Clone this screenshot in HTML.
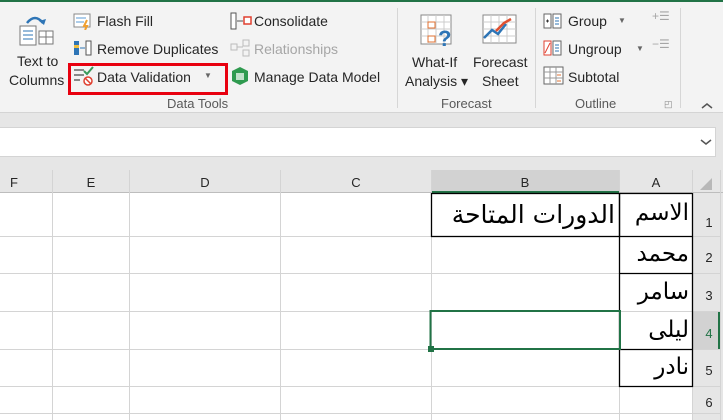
<!DOCTYPE html>
<html><head><meta charset="utf-8"><style>
*{box-sizing:border-box;margin:0;padding:0}
body{width:723px;height:420px;overflow:hidden;background:#e6e6e6;font-family:"Liberation Sans",sans-serif;position:relative;font-size:13px;color:#262626}
.abs{position:absolute}
.rib{left:0;top:0;width:723px;height:113px;background:#f3f3f3;border-top:2px solid #217346;border-bottom:1px solid #d4d4d4}
.t{position:absolute;white-space:nowrap;font-size:14px;color:#262626}
.g{color:#a6a6a6}
.sep{position:absolute;top:6px;width:1px;height:100px;background:#d6d6d6}
.lbl{position:absolute;font-size:13px;color:#595959;top:94px}
.ic{position:absolute}
.cell{position:absolute;background:#fff}
.ar{position:absolute;direction:rtl;text-align:right;font-family:"DejaVu Sans","Noto Sans CJK SC",sans-serif;font-size:23px;color:#000;white-space:nowrap;line-height:1}
</style></head><body>
<div class="abs rib">
 <svg class="ic" style="left:17px;top:9px" width="40" height="36"><path d="M10 12 Q18 2 26 12" fill="none" stroke="#2e75b6" stroke-width="2.5"/><path d="M22 10 l5 4 2-6z" fill="#2e75b6"/><rect x="3" y="15" width="16" height="19" fill="#fff" stroke="#777"/><path d="M6 20h10M6 24h10M6 28h10" stroke="#2e75b6"/><rect x="22" y="20" width="14" height="13" fill="#fff" stroke="#777"/><path d="M22 26h14M29 20v13" stroke="#777"/></svg>
 <div class="t" style="left:17px;top:51px">Text to</div>
 <div class="t" style="left:9px;top:70px">Columns</div>
 <svg class="ic" style="left:73px;top:10px" width="20" height="18"><rect x="1" y="2" width="16" height="13" fill="#fff" stroke="#888"/><path d="M3 6h10M3 10h8" stroke="#5b9bd5"/><path d="M14 8l-3 6h3l-2 4" stroke="#f0a030" stroke-width="2" fill="none"/></svg>
 <div class="t" style="left:97px;top:11px">Flash Fill</div>
 <svg class="ic" style="left:73px;top:37px" width="20" height="18"><rect x="1" y="2" width="5" height="14" fill="#2e75b6"/><rect x="13" y="2" width="5" height="14" fill="#fff" stroke="#555"/><path d="M7 9h5" stroke="#2e75b6"/><rect x="1" y="6" width="5" height="3" fill="#f0c040"/></svg>
 <div class="t" style="left:97px;top:39px">Remove Duplicates</div>
 <svg class="ic" style="left:73px;top:64px" width="22" height="20"><path d="M1 4h10M1 9h10M1 14h6" stroke="#888" stroke-width="2"/><path d="M11 5l3 3 6-7" stroke="#3a9a5a" stroke-width="2" fill="none"/><circle cx="15" cy="15" r="4" fill="#fff" stroke="#e04030" stroke-width="1.5"/><path d="M12 12l6 6" stroke="#e04030" stroke-width="1.5"/></svg>
 <div class="t" style="left:97px;top:67px">Data Validation</div>
 <div class="t" style="left:204px;top:69px;font-size:8px;color:#666">▼</div>
 <div class="abs" style="left:68px;top:61px;width:160px;height:32px;border:3px solid #e8000f"></div>
 <svg class="ic" style="left:230px;top:10px" width="22" height="18"><rect x="1" y="1" width="5" height="16" fill="#fff" stroke="#555"/><path d="M7 9h6" stroke="#555"/><rect x="14" y="5" width="7" height="7" fill="#fff" stroke="#e04030" stroke-width="1.5"/></svg>
 <div class="t" style="left:254px;top:11px">Consolidate</div>
 <svg class="ic" style="left:230px;top:37px" width="22" height="18"><rect x="1" y="5" width="6" height="6" fill="none" stroke="#bbb"/><rect x="13" y="1" width="6" height="6" fill="none" stroke="#bbb"/><rect x="13" y="11" width="6" height="6" fill="none" stroke="#bbb"/><path d="M7 8h6" stroke="#bbb"/></svg>
 <div class="t g" style="left:254px;top:39px">Relationships</div>
 <svg class="ic" style="left:230px;top:64px" width="20" height="20"><path d="M10 1l8 4v10l-8 4-8-4V5z" fill="#2f9a4f"/><path d="M6 7h8v7H6z" fill="#fff" opacity=".7"/></svg>
 <div class="t" style="left:254px;top:67px">Manage Data Model</div>
 <div class="lbl" style="left:167px">Data Tools</div>
 <div class="sep" style="left:397px"></div>
 <svg class="ic" style="left:420px;top:12px" width="36" height="34"><rect x="1" y="1" width="30" height="29" fill="#fff" stroke="#888"/><path d="M1 8h30M1 15h30M1 22h30M8 1v29M16 1v29M24 1v29" stroke="#ccc"/><rect x="8" y="8" width="7" height="6" fill="none" stroke="#e07030"/><rect x="8" y="22" width="7" height="6" fill="none" stroke="#e07030"/><text x="18" y="32" font-size="22" font-weight="bold" fill="#2e75b6" font-family="Liberation Sans">?</text></svg>
 <div class="t" style="left:412px;top:52px">What-If</div>
 <div class="t" style="left:405px;top:71px">Analysis ▾</div>
 <svg class="ic" style="left:482px;top:12px" width="36" height="32"><rect x="1" y="1" width="33" height="28" fill="#fff" stroke="#888"/><path d="M1 8h33M1 15h33M1 22h33M9 1v28M17 1v28M25 1v28" stroke="#ccc"/><path d="M2 24l8-8 6 4 8-10" stroke="#2e75b6" stroke-width="2.5" fill="none"/><path d="M14 17l8-8 7-4" stroke="#e05030" stroke-width="2.5" fill="none"/></svg>
 <div class="t" style="left:473px;top:52px">Forecast</div>
 <div class="t" style="left:482px;top:71px">Sheet</div>
 <div class="lbl" style="left:441px">Forecast</div>
 <div class="sep" style="left:535px"></div>
 <svg class="ic" style="left:543px;top:10px" width="22" height="18"><rect x="1" y="2" width="7" height="14" fill="#fff" stroke="#666"/><path d="M3 9h3M4.5 7.5v3" stroke="#333"/><rect x="10" y="2" width="8" height="14" fill="#fff" stroke="#666"/><path d="M12 6h4M12 9h4M12 12h4" stroke="#2e75b6"/></svg>
 <div class="t" style="left:568px;top:11px">Group</div>
 <div class="t" style="left:618px;top:14px;font-size:8px;color:#666">▼</div>
 <svg class="ic" style="left:543px;top:37px" width="22" height="18"><rect x="1" y="2" width="7" height="14" fill="#fff" stroke="#e04030"/><path d="M2 14l5-10" stroke="#e04030"/><rect x="10" y="2" width="8" height="14" fill="#fff" stroke="#666"/><path d="M12 6h4M12 9h4M12 12h4" stroke="#2e75b6"/></svg>
 <div class="t" style="left:568px;top:39px">Ungroup</div>
 <div class="t" style="left:636px;top:42px;font-size:8px;color:#666">▼</div>
 <svg class="ic" style="left:543px;top:64px" width="22" height="20"><rect x="1" y="1" width="19" height="17" fill="#fff" stroke="#666"/><path d="M7 1v17M1 6h19M1 12h19M13 1v17" stroke="#999"/><path d="M14 9h4M14 15h4" stroke="#e07030"/></svg>
 <div class="t" style="left:568px;top:67px">Subtotal</div>
 <div class="t g" style="left:652px;top:7px;font-size:12px">+☰</div>
 <div class="t g" style="left:652px;top:35px;font-size:12px">−☰</div>
 <div class="lbl" style="left:575px">Outline</div>
 <div class="t" style="left:664px;top:97px;font-size:9px;color:#888">◰</div>
 <div class="sep" style="left:680px"></div>
 <svg class="ic" style="left:701px;top:100px" width="12" height="8"><path d="M1 6l5-4 5 4" stroke="#555" stroke-width="1.5" fill="none"/></svg>
</div>
<div class="abs" style="left:0;top:127px;width:716px;height:30px;background:#fff;border:1px solid #d4d4d4;border-left:none"></div>
<svg class="abs" style="left:700px;top:138px" width="12" height="8"><path d="M1 2l5 4 5-4" stroke="#555" stroke-width="1.5" fill="none"/></svg>
<div class="abs" style="left:0;top:170px;width:723px;height:23px;background:#e6e6e6;border-bottom:1px solid #bdbdbd"></div>
<div class="abs" style="left:431px;top:170px;width:188px;height:23px;background:#d2d2d2;border-bottom:2px solid #217346"></div>
<div class="cell" style="left:0;top:193px;width:692px;height:227px"></div>
<div class="abs" style="left:692px;top:193px;width:31px;height:227px;background:#e6e6e6"></div>
<div class="abs" style="left:692px;top:311px;width:28px;height:38px;background:#d2d2d2;border-right:2px solid #217346"></div>
<svg class="abs" style="left:0;top:170px" width="723" height="250">
<g stroke="#d4d4d4" stroke-width="1">
<path d="M52.5 0V250M129.5 0V250M280.5 0V250M431.5 0V250M619.5 0V250M692.5 0V250M720.5 0V250"/>
<path d="M0 66.5H720M0 103.5H720M0 141.5H720M0 179.5H720M0 216.5H720M0 243.5H720"/>
</g>
<path d="M700 20l12-12v12z" fill="#b8b8b8"/>
<g font-family="Liberation Sans" font-size="13" fill="#262626" text-anchor="middle">
<text x="14" y="17">F</text><text x="91" y="17">E</text><text x="205" y="17">D</text><text x="356" y="17">C</text><text x="525" y="17">B</text><text x="656" y="17">A</text>
<text x="709" y="57">1</text><text x="709" y="92">2</text><text x="709" y="130">3</text><text x="709" y="168" fill="#217346">4</text><text x="709" y="205">5</text><text x="709" y="237">6</text>
</g>
<g stroke="#000" fill="none" stroke-width="1.3">
<rect x="431.5" y="23.5" width="188" height="43"/>
<path d="M619.5 23.5H692.5V216.5H619.5ZM619.5 66.5H692.5M619.5 103.5H692.5M619.5 179.5H692.5"/>
</g>
<rect x="430.5" y="141" width="189.5" height="38" fill="none" stroke="#217346" stroke-width="2"/>
<rect x="428" y="176" width="6" height="6" fill="#217346"/>
</svg>
<div class="ar" style="right:34px;top:202px">الاسم</div>
<div class="ar" style="right:108px;top:202px;font-size:25px;letter-spacing:1px">الدورات المتاحة</div>
<div class="ar" style="right:34px;top:243px">محمد</div>
<div class="ar" style="right:34px;top:281px">سامر</div>
<div class="ar" style="right:34px;top:319px">ليلى</div>
<div class="ar" style="right:34px;top:356px">نادر</div>
</body></html>
